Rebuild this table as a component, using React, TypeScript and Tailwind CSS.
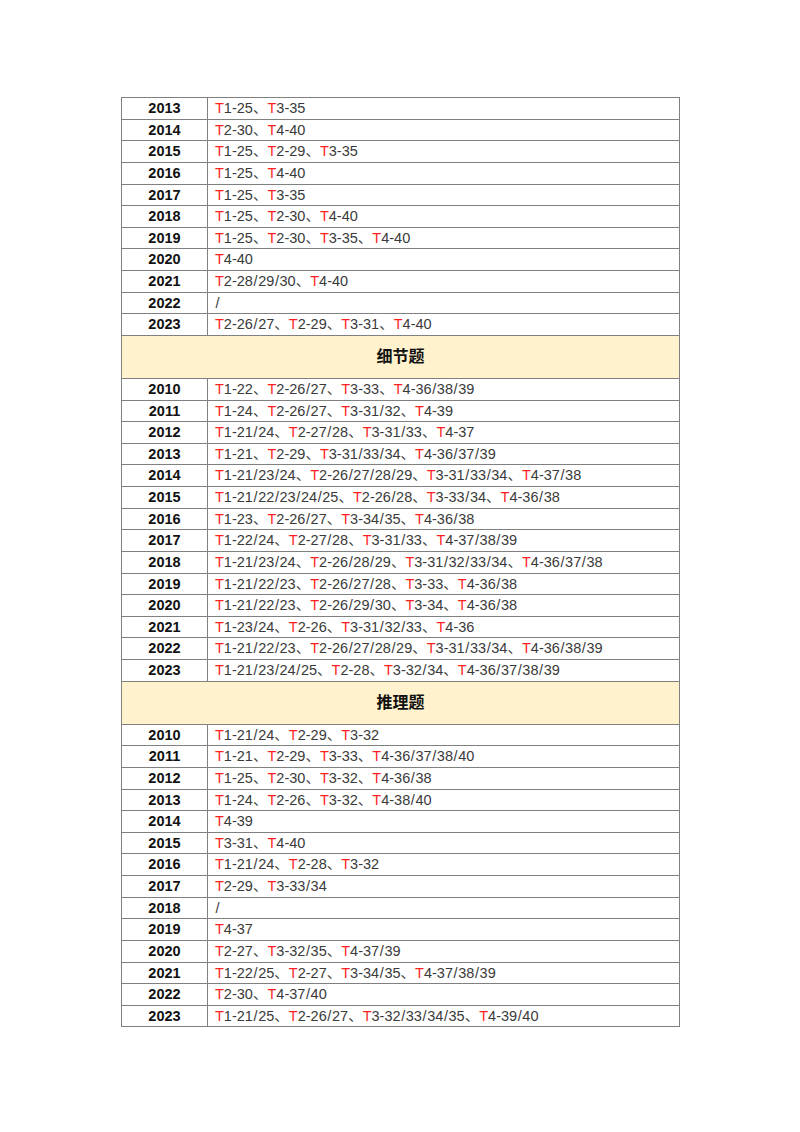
import React from 'react';

type Row = [string, string];

const intro: Row[] = [
  ['2013', 'T1-25、T3-35'],
  ['2014', 'T2-30、T4-40'],
  ['2015', 'T1-25、T2-29、T3-35'],
  ['2016', 'T1-25、T4-40'],
  ['2017', 'T1-25、T3-35'],
  ['2018', 'T1-25、T2-30、T4-40'],
  ['2019', 'T1-25、T2-30、T3-35、T4-40'],
  ['2020', 'T4-40'],
  ['2021', 'T2-28/29/30、T4-40'],
  ['2022', '/'],
  ['2023', 'T2-26/27、T2-29、T3-31、T4-40'],
];

const detail: Row[] = [
  ['2010', 'T1-22、T2-26/27、T3-33、T4-36/38/39'],
  ['2011', 'T1-24、T2-26/27、T3-31/32、T4-39'],
  ['2012', 'T1-21/24、T2-27/28、T3-31/33、T4-37'],
  ['2013', 'T1-21、T2-29、T3-31/33/34、T4-36/37/39'],
  ['2014', 'T1-21/23/24、T2-26/27/28/29、T3-31/33/34、T4-37/38'],
  ['2015', 'T1-21/22/23/24/25、T2-26/28、T3-33/34、T4-36/38'],
  ['2016', 'T1-23、T2-26/27、T3-34/35、T4-36/38'],
  ['2017', 'T1-22/24、T2-27/28、T3-31/33、T4-37/38/39'],
  ['2018', 'T1-21/23/24、T2-26/28/29、T3-31/32/33/34、T4-36/37/38'],
  ['2019', 'T1-21/22/23、T2-26/27/28、T3-33、T4-36/38'],
  ['2020', 'T1-21/22/23、T2-26/29/30、T3-34、T4-36/38'],
  ['2021', 'T1-23/24、T2-26、T3-31/32/33、T4-36'],
  ['2022', 'T1-21/22/23、T2-26/27/28/29、T3-31/33/34、T4-36/38/39'],
  ['2023', 'T1-21/23/24/25、T2-28、T3-32/34、T4-36/37/38/39'],
];

const inference: Row[] = [
  ['2010', 'T1-21/24、T2-29、T3-32'],
  ['2011', 'T1-21、T2-29、T3-33、T4-36/37/38/40'],
  ['2012', 'T1-25、T2-30、T3-32、T4-36/38'],
  ['2013', 'T1-24、T2-26、T3-32、T4-38/40'],
  ['2014', 'T4-39'],
  ['2015', 'T3-31、T4-40'],
  ['2016', 'T1-21/24、T2-28、T3-32'],
  ['2017', 'T2-29、T3-33/34'],
  ['2018', '/'],
  ['2019', 'T4-37'],
  ['2020', 'T2-27、T3-32/35、T4-37/39'],
  ['2021', 'T1-22/25、T2-27、T3-34/35、T4-37/38/39'],
  ['2022', 'T2-30、T4-37/40'],
  ['2023', 'T1-21/25、T2-26/27、T3-32/33/34/35、T4-39/40'],
];

// red "T", slightly wider slash than Arial's
const Items: React.FC<{ text: string }> = ({ text }) => (
  <>
    {text.split('').map((ch, i) =>
      ch === 'T' ? (
        <span key={i} className="text-[#ff1f1f]">T</span>
      ) : ch === '/' ? (
        <span key={i} className="mx-[0.6px]">/</span>
      ) : (
        <span key={i}>{ch}</span>
      )
    )}
  </>
);

const DataRows: React.FC<{ rows: Row[] }> = ({ rows }) => (
  <>
    {rows.map(([year, text], i) => (
      <tr key={year + i} className="h-[21.64px]">
        <td className="border border-[#808080] w-[86px] p-0 text-center font-bold text-[#111]">{year}</td>
        <td className="border border-[#808080] p-0 pl-[7px] text-[#3a3a3a] whitespace-nowrap">
          <Items text={text} />
        </td>
      </tr>
    ))}
  </>
);

const Heading: React.FC<{ title: string }> = ({ title }) => (
  <tr className="h-[43px]">
    <td colSpan={2} className="border border-[#808080] bg-[#fff2cc] p-0 text-center font-bold text-[16px] text-[#111]">
      {title}
    </td>
  </tr>
);

export default function App() {
  return (
    <div
      className="w-[800px] h-[1132px] bg-white pt-[97px] pl-[121px]"
      style={{ fontFamily: '"Liberation Sans", "Noto Sans CJK SC", sans-serif' }}
    >
      <table className="border-collapse w-[559px] text-[14.5px] leading-none">
        <tbody>
          <DataRows rows={intro} />
          <Heading title="细节题" />
          <DataRows rows={detail} />
          <Heading title="推理题" />
          <DataRows rows={inference} />
        </tbody>
      </table>
    </div>
  );
}
